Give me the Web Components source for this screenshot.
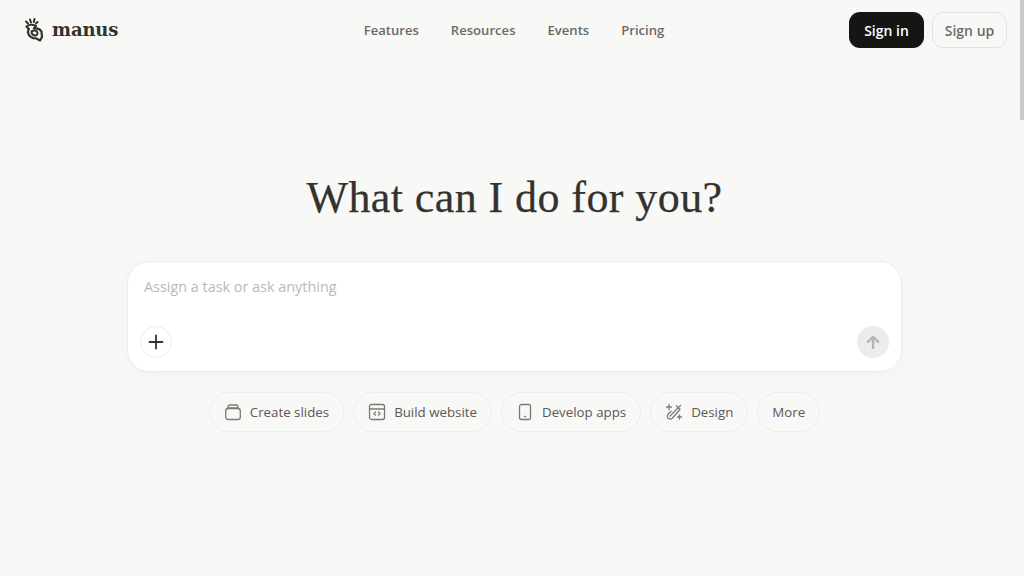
<!DOCTYPE html>
<html lang="en">
<head>
<meta charset="utf-8">
<title>Manus</title>
<style>
  html, body { margin: 0; height: 100%; overflow: hidden; background: #f8f8f7; }
  body { font-family: "Open Sans", "Noto Sans", sans-serif; color: #34322d; }
</style>
</head>
<body>
<app-page>
  <site-header></site-header>
  <hero-panel>
    <task-box placeholder="Assign a task or ask anything"></task-box>
    <chip-row>
      <task-chip icon="slides">Create slides</task-chip>
      <task-chip icon="web">Build website</task-chip>
      <task-chip icon="phone">Develop apps</task-chip>
      <task-chip icon="design">Design</task-chip>
      <task-chip>More</task-chip>
    </chip-row>
  </hero-panel>
</app-page>

<script>
class AppPage extends HTMLElement {
  constructor() {
    super();
    this.attachShadow({ mode: 'open' });
    this.shadowRoot.innerHTML = `
    <style>
    :host { display: block; height: 576px; position: relative; overflow: hidden; }
    .thumb { position: absolute; top: 0; right: 0; width: 4px; height: 120px; background: #c9c9c9; }
    </style>
    <slot></slot>
    <div class="thumb"></div>
    `;
  }
}

class SiteHeader extends HTMLElement {
  constructor() {
    super();
    this.attachShadow({ mode: 'open' });
    this.shadowRoot.innerHTML = `
    <style>
    :host { display: grid; grid-template-columns: 1fr auto 1fr; align-items: center; height: 60px; padding: 0 17px 0 24px; }
    .logo { display: flex; align-items: center; gap: 7px; }
    .logo span { font-family: "DejaVu Serif", serif; font-weight: 700; font-size: 18px; letter-spacing: -0.15px; color: #34322d; position: relative; top: -1px; }
    nav { display: flex; gap: 32px; padding-right: 3px; }
    nav a { font-size: 13.1px; font-weight: 600; color: #6b6a66; }
    .actions { display: flex; gap: 8px; justify-content: flex-end; }
    button { width: 75px; height: 36px; box-sizing: border-box; border-radius: 11px; font: 600 14px "Open Sans", sans-serif; padding: 0; }
    .in { background: #151514; color: #fff; border: 0; }
    .up { background: #f8f8f7; color: #6b6a66; border: 1px solid #e3e3e1; }
    </style>
    <div class="logo">
      <svg width="21" height="24" viewBox="0 0 21 24" fill="none" stroke="#34322d" stroke-linecap="round" stroke-linejoin="round">
        <path d="M2 3.500 4 5.500M6 1.500 7 4.500M10.500 1 9.800 4M13.500 4 12 5.500" stroke-width="2"/>
        <path d="M2.500 8.500C5 6.500 9 6.500 12 8L10 10.500C13 10 16 11 17.500 13.500L18 19 16 22.500 12.500 20.500C8 20.500 4.500 18 4 14.500 3.800 13 4.200 12 5 11.200Z" stroke-width="2.200"/>
        <path d="M7.500 13.500C9 12 12 12 13.200 14S12.500 18 10.500 17.500 7.500 15.500 7.500 13.500Z" stroke-width="2"/>
      </svg>
      <span>manus</span>
    </div>
    <nav><a>Features</a><a>Resources</a><a>Events</a><a>Pricing</a></nav>
    <div class="actions"><button class="in">Sign in</button><button class="up">Sign up</button></div>
    `;
  }
}

class HeroPanel extends HTMLElement {
  constructor() {
    super();
    this.attachShadow({ mode: 'open' });
    this.shadowRoot.innerHTML = `
    <style>
    :host { display: flex; flex-direction: column; align-items: center; padding: 108px 0 0 5px; }
    h1 { margin: 0 0 33px; font: 400 44px/60px "Liberation Serif", serif; color: #34322d; letter-spacing: 0.42px; -webkit-text-stroke: 0.25px #34322d; }
    </style>
    <h1>What can I do for you?</h1>
    <slot></slot>
    `;
  }
}

class TaskBox extends HTMLElement {
  constructor() {
    super();
    this.attachShadow({ mode: 'open' });
    this.shadowRoot.innerHTML = `
    <style>
    :host { display: flex; flex-direction: column; justify-content: space-between; box-sizing: border-box; width: 775px; height: 111px; padding: 14px 12px 13px; background: #fff; border: 1px solid #ececea; border-radius: 22px; box-shadow: 0 6px 16px rgba(0,0,0,0.025); }
    .hint { padding-left: 4px; font-size: 14.4px; line-height: 22px; color: #b9b9b7; }
    .tools { display: flex; justify-content: space-between; align-items: center; }
    .round { display: flex; align-items: center; justify-content: center; width: 32px; height: 32px; box-sizing: border-box; border-radius: 50%; }
    .add { border: 1px solid #eeeeec; }
    .send { background: #ececeb; }
    </style>
    <div class="hint"></div>
    <div class="tools">
      <div class="round add">
        <svg width="16" height="16" viewBox="0 0 16 16" fill="none" stroke="#34322d" stroke-width="1.800" stroke-linecap="round"><path d="M8 1.500v13M1.500 8h13"/></svg>
      </div>
      <div class="round send">
        <svg width="16" height="16" viewBox="0 0 16 16" fill="none" stroke="#b4b4b2" stroke-width="2.300" stroke-linecap="round" stroke-linejoin="round"><path d="M8 14V3M2.800 7.800 8 2.800l5.200 5"/></svg>
      </div>
    </div>
    `;
    this.shadowRoot.querySelector('.hint').textContent = this.getAttribute('placeholder');
  }
}

class ChipRow extends HTMLElement {
  constructor() {
    super();
    this.attachShadow({ mode: 'open' });
    this.shadowRoot.innerHTML = `
    <style>
    :host { display: flex; gap: 9px; margin-top: 20px; }
    </style>
    <slot></slot>
    `;
  }
}

const CHIP_ICONS = {
  slides: '<rect x="1.700" y="5.500" width="14.600" height="11" rx="2.500"/><path d="M4 5.500V3.700C4 2.700 4.700 2 5.700 2h6.600C13.300 2 14 2.700 14 3.700V5.500"/><path d="M4 5h10" />',
  web: '<rect x="1.500" y="1.500" width="15" height="15" rx="2"/><path d="M1.500 6h15"/><path d="M7.500 9 6 10.500 7.500 12M10.500 9 12 10.500 10.500 12"/>',
  phone: '<rect x="3.500" y="1.500" width="11" height="15" rx="2"/><path d="M8.500 13.500h1"/>',
  design: '<path d="M15.500 2.500 5 13"/><path d="M11.500 3 15 6.500 7.500 15C6.300 16.200 4.300 16.200 3.200 15.200S2 12.300 3.200 11L6 8.200"/><path d="M4 1.500v5M1.500 4h5M14.500 12v4M12.500 14h4"/>'
};

class TaskChip extends HTMLElement {
  constructor() {
    super();
    this.attachShadow({ mode: 'open' });
    const icon = CHIP_ICONS[this.getAttribute('icon')];
    this.shadowRoot.innerHTML = `
    <style>
    :host { display: inline-flex; align-items: center; gap: 8px; box-sizing: border-box; height: 40px; padding: 0 14px; border: 1px solid #ececea; border-radius: 20px; font-size: 13.300px; color: #5a5955; white-space: nowrap; }
    svg { display: block; }
    </style>
    ${icon ? `<svg width="18" height="18" viewBox="0 0 18 18" fill="none" stroke="#7b7a76" stroke-width="1.300" stroke-linecap="round" stroke-linejoin="round">${icon}</svg>` : ''}
    <slot></slot>
    `;
  }
}

customElements.define('app-page', AppPage);
customElements.define('site-header', SiteHeader);
customElements.define('hero-panel', HeroPanel);
customElements.define('task-box', TaskBox);
customElements.define('chip-row', ChipRow);
customElements.define('task-chip', TaskChip);
</script>
</body>
</html>
